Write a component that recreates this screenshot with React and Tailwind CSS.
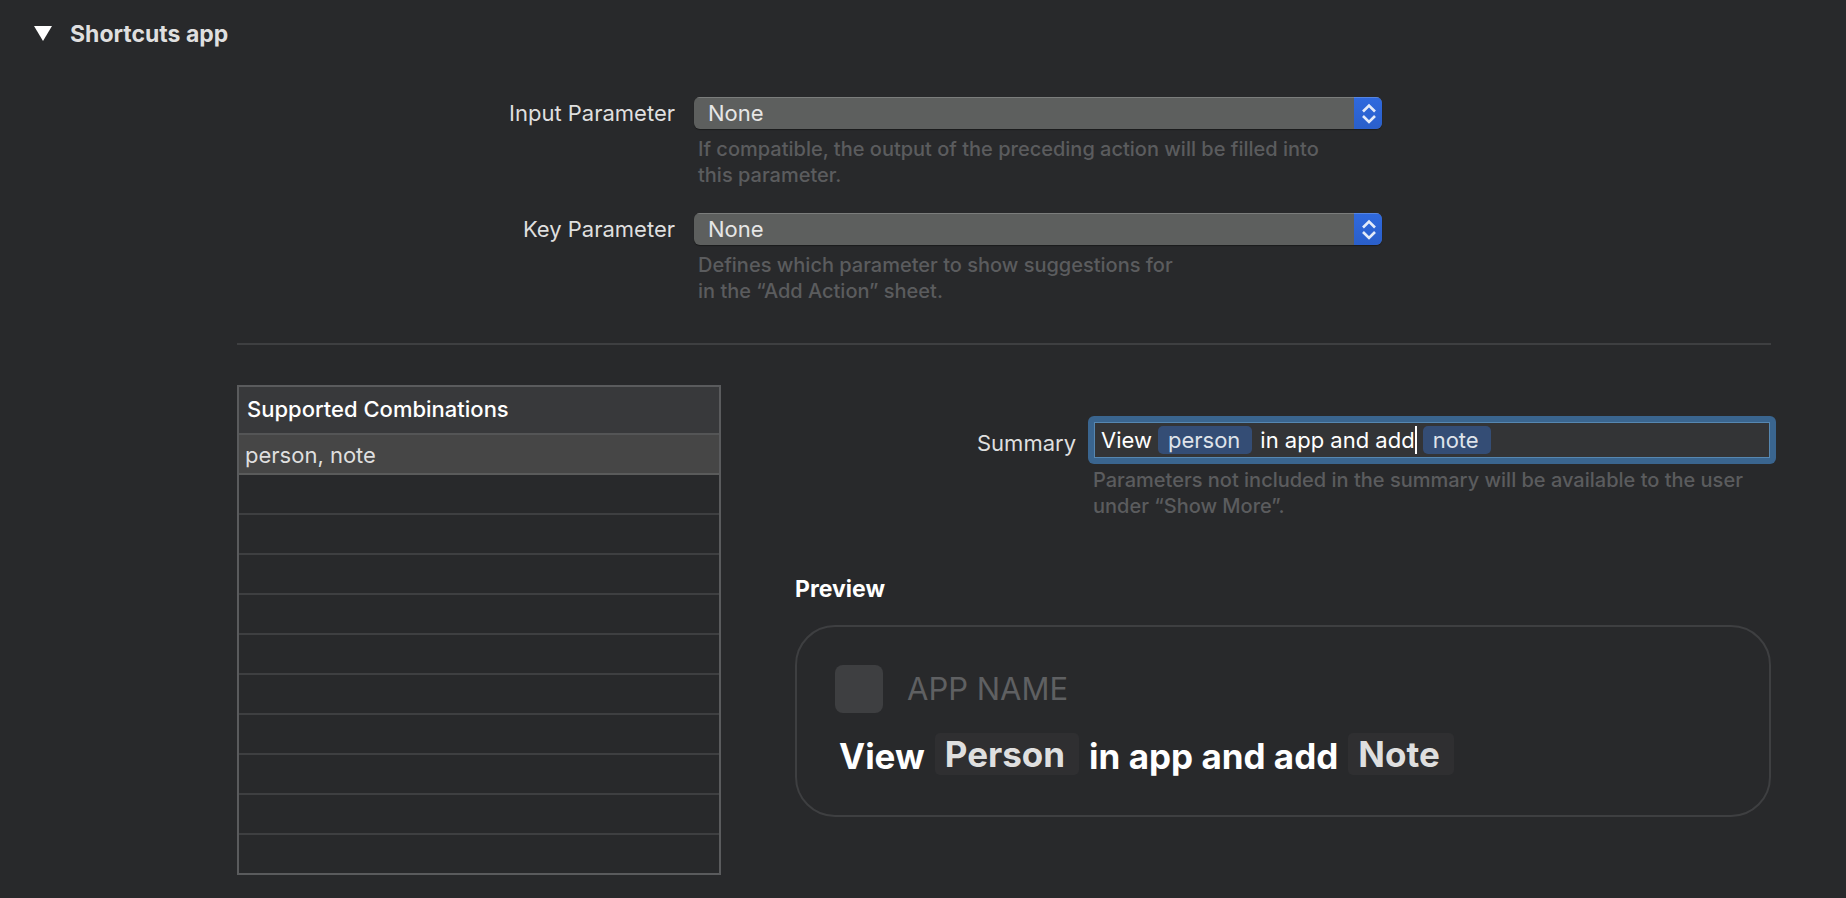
const EMPTY_ROWS = Array.from({ length: 10 }, (_, i) => i);

function PopUpButton({ id, label, help, narrow }) {
  return (
    <>
      <label htmlFor={id} className="text-right text-[22px] leading-8 text-[#dfdfdf]">
        {label}
      </label>
      <div>
        <div className="relative flex h-8 overflow-hidden rounded-md bg-[#5d5f5e] shadow-[0_1px_1px_rgba(0,0,0,0.35)]">
          <select
            id={id}
            defaultValue="None"
            className="h-8 w-full appearance-none border-t border-[#7b7d7c] bg-transparent pr-10 pl-3.5 text-[22px] leading-[31px] text-[#e6e6e6] outline-none"
          >
            <option>None</option>
          </select>
          <span className="pointer-events-none absolute inset-y-0 right-0 flex w-7 items-center justify-center border-t border-[#5585e3] bg-linear-to-b from-[#2f69de] to-[#2a5fca] pl-0.5">
            <svg width="16" height="22" viewBox="0 0 16 22" fill="none" stroke="#e4ebf9" strokeWidth="2.6" aria-hidden="true">
              <path d="M2 8.5 8 2.5l6 6M2 13l6 6 6-6" />
            </svg>
          </span>
        </div>
        <p className={`mt-[7px] pl-1 text-[20px] leading-[26px] font-medium text-[#5b5c5e] ${narrow ? "max-w-[492px]" : "max-w-[660px]"}`}>
          {help}
        </p>
      </div>
    </>
  );
}

function Token({ children }) {
  return (
    <span className="rounded-[5px] bg-[#344d75] pr-3 pl-2.5 text-[22px] leading-7 text-[#dfe3ea]">
      {children}
    </span>
  );
}

function PreviewToken({ children }) {
  return (
    <span className="rounded-[5px] bg-[#2f2f31] pr-3.5 pl-2.5 leading-[42px] text-[#dfdfdf]">{children}</span>
  );
}

export default function App() {
  return (
    <main className="min-h-screen bg-[#28292b] pb-6 font-['Inter','Liberation_Sans',sans-serif]">
      <h1 className="pt-[18px] pl-[34px]">
        <button type="button" aria-expanded="true" className="flex items-center gap-[18px] text-[23px] leading-8 font-bold text-[#dfdfdf]">
          <svg width="18" height="16" viewBox="0 0 18 16" fill="#fff" aria-hidden="true">
            <path d="M0 0h18L9 15z" />
          </svg>
          Shortcuts app
        </button>
      </h1>

      <div className="mr-[75px] ml-[237px]">
        <section className="mt-[47px] grid grid-cols-[438px_minmax(0,688px)] gap-x-[19px] gap-y-[25px] border-b-2 border-[#3e3f41] pb-[39px]">
          <PopUpButton
            id="input-parameter"
            label="Input Parameter"
            help="If compatible, the output of the preceding action will be filled into this parameter."
          />
          <PopUpButton
            id="key-parameter"
            label="Key Parameter"
            help="Defines which parameter to show suggestions for in the “Add Action” sheet."
            narrow
          />
        </section>

        <section className="mt-10 flex items-start gap-[74px]">
          <table className="w-[484px] shrink-0 border-separate border-spacing-0 border-2 border-[#5a5b5d] text-left text-[22px]">
            <thead>
              <tr>
                <th className="h-12 border-b-2 border-[#545556] bg-[#38393b] px-2 pb-0.5 font-medium text-white">
                  Supported Combinations
                </th>
              </tr>
            </thead>
            <tbody>
              <tr>
                <td className="h-10 border-b-2 border-[#5a5b5b] bg-[#464646] px-1.5 pt-0.5 pb-0 leading-8 text-[#dfdfdf]">person, note</td>
              </tr>
              {EMPTY_ROWS.map((row) => (
                <tr key={row}>
                  <td className={row === 9 ? "h-[38px] p-0" : "h-10 border-b-2 border-[#3e3f41] p-0"} />
                </tr>
              ))}
            </tbody>
          </table>

          <div className="min-w-0 flex-1">
            <div className="grid grid-cols-[281px_minmax(0,1fr)] gap-x-3">
              <label htmlFor="summary" className="pt-[42px] text-right text-[22px] leading-8 text-[#dfdfdf]">
                Summary
              </label>
              <div className="pt-[31px]">
                <div className="-mr-[5px] rounded-md bg-[#3a658f] p-1.5">
                  <div className="flex h-9 items-center border border-[#5687b1] bg-[#333436] pl-1.5 text-[22px] leading-7 text-white">
                    <input id="summary" defaultValue="View" className="mr-1.5 field-sizing-content bg-transparent outline-none" />
                    <Token>person</Token>
                    <input
                      aria-label="Summary text after person"
                      defaultValue="in app and add"
                      className="ml-2 field-sizing-content bg-transparent outline-none"
                    />
                    <span className="mr-1.5 h-7 w-0.5 bg-white" />
                    <Token>note</Token>
                    <input aria-label="Summary text after note" className="min-w-0 flex-1 bg-transparent outline-none" />
                  </div>
                </div>
                <p className="mt-[3px] pl-[5px] text-[20px] leading-[26px] font-medium text-[#5b5c5e]">
                  Parameters not included in the summary will be available to the user under “Show More”.
                </p>
              </div>
            </div>

            <h2 className="mt-[54px] text-[23px] leading-8 font-bold text-white">Preview</h2>
            <div className="mt-5 min-h-48 rounded-[40px] border-2 border-[#3e3f41] pt-[38px] pl-[38px]">
              <div className="flex items-center gap-6">
                <span className="size-12 rounded-lg bg-[#3e3f41]" />
                <span className="text-[31px] leading-12 text-[#5f6062]">APP NAME</span>
              </div>
              <p className="mt-5 flex items-start gap-2.5 pl-1 text-[35px] leading-[46px] font-bold whitespace-nowrap text-white">
                View <PreviewToken>Person</PreviewToken> in app and add <PreviewToken>Note</PreviewToken>
              </p>
            </div>
          </div>
        </section>
      </div>
    </main>
  );
}
